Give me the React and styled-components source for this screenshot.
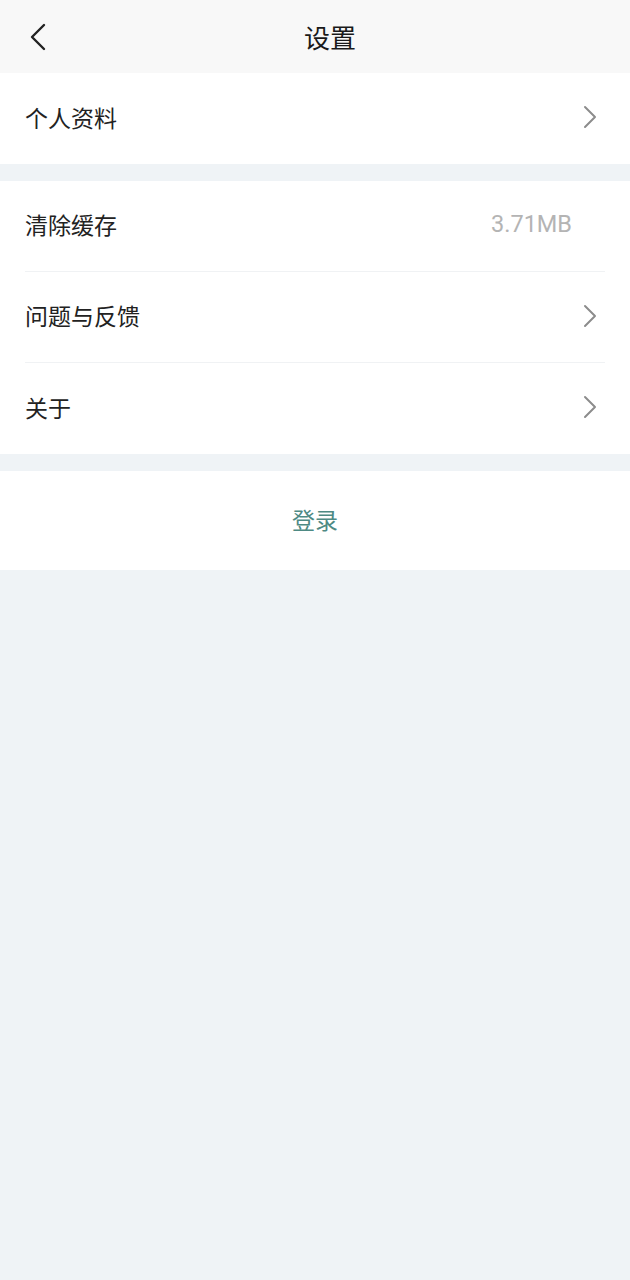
import React from 'react'
import styled, { createGlobalStyle } from 'styled-components'

const Global = createGlobalStyle`
  html, body {
    margin: 0;
    padding: 0;
    background: #eff3f6;
    font-family: "Noto Sans CJK SC", "Liberation Sans", sans-serif;
  }
`

const Page = styled.div`
  width: 630px;
  min-height: 1280px;
  background: #eff3f6;
`

const Header = styled.div`
  height: 73px;
  background: #f8f8f8;
  display: grid;
  grid-template-columns: 110px 1fr 80px;
  align-items: center;
`

const Back = styled.div`
  display: flex;
  align-items: center;
  padding-left: 29px;
  padding-top: 1px;
`

const Title = styled.div`
  text-align: center;
  font-size: 26px;
  color: #1a1a1a;
  line-height: 1;
`

const Group = styled.div`
  background: #fff;
  margin-bottom: 17px;
`

const Row = styled.div`
  height: 91px;
  margin-left: 25px;
  margin-right: 25px;
  padding-bottom: 3px;
  display: flex;
  align-items: center;
  justify-content: space-between;
  border-bottom: ${p => (p.last ? 'none' : '1px solid #f0f2f4')};
  box-sizing: border-box;
`

const Label = styled.span`
  font-size: 23px;
  line-height: 1;
  color: #222;
`

const Value = styled.span`
  font-family: Roboto, "Liberation Sans", sans-serif;
  font-size: 23.5px;
  line-height: 1;
  color: #b4b4b4;
  margin-right: 33px;
`

const Chevron = styled.svg`
  width: 14px;
  height: 24px;
  margin-right: 8px;
`

const Login = styled.div`
  height: 99px;
  background: #fff;
  display: flex;
  align-items: center;
  justify-content: center;
  padding-bottom: 3px;
  box-sizing: border-box;
  font-size: 23px;
  line-height: 1;
  color: #4e8a84;
`

function Arrow() {
  return (
    <Chevron viewBox="0 0 14 24">
      <path d="M2 2 L12 12 L2 22" fill="none" stroke="#8c8c8c" strokeWidth="2" strokeLinecap="round" strokeLinejoin="round" />
    </Chevron>
  )
}

export default function App() {
  return (
    <Page>
      <Global />
      <Header>
        <Back>
          <svg width="17" height="28" viewBox="0 0 17 28">
            <path d="M15 2 L3 14 L15 26" fill="none" stroke="#222" strokeWidth="2.4" strokeLinecap="round" strokeLinejoin="round" />
          </svg>
        </Back>
        <Title>设置</Title>
        <div />
      </Header>
      <Group>
        <Row last>
          <Label>个人资料</Label>
          <Arrow />
        </Row>
      </Group>
      <Group>
        <Row>
          <Label>清除缓存</Label>
          <Value>3.71MB</Value>
        </Row>
        <Row>
          <Label>问题与反馈</Label>
          <Arrow />
        </Row>
        <Row last>
          <Label>关于</Label>
          <Arrow />
        </Row>
      </Group>
      <Login>登录</Login>
    </Page>
  )
}
